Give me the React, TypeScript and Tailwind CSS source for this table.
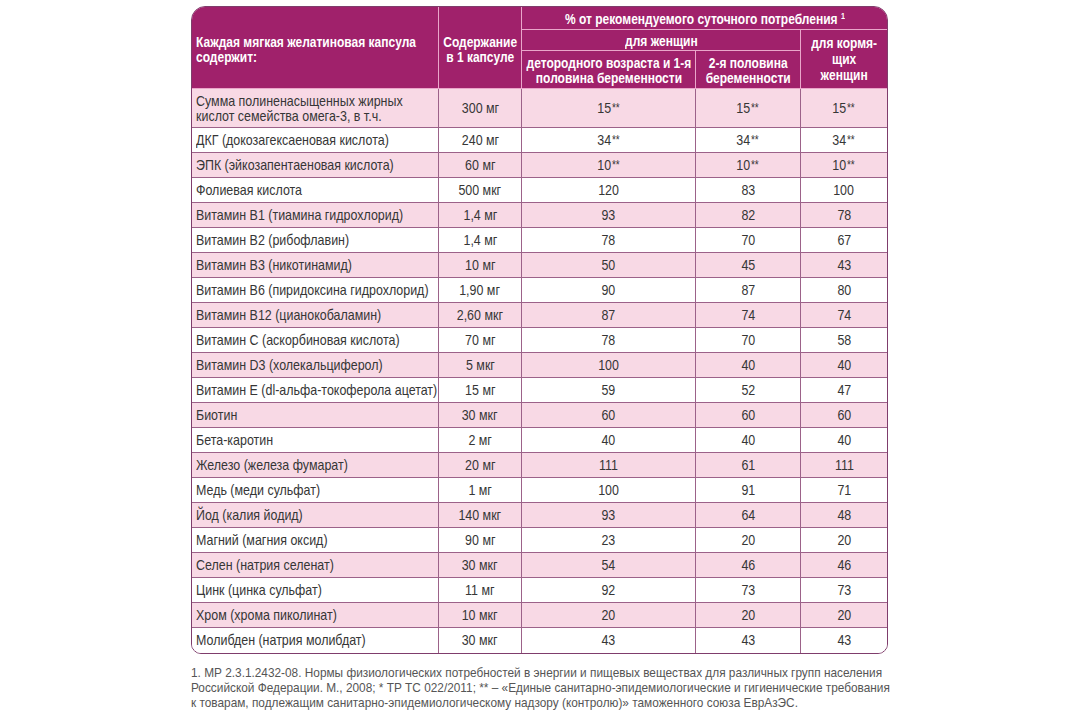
import type { ReactNode } from "react";

const rows: [string, string, string, string, string, boolean?][] = [
  ["ДКГ (докозагексаеновая кислота)", "240 мг", "34", "34", "34", true],
  ["ЭПК (эйкозапентаеновая кислота)", "60 мг", "10", "10", "10", true],
  ["Фолиевая кислота", "500 мкг", "120", "83", "100"],
  ["Витамин В1 (тиамина гидрохлорид)", "1,4 мг", "93", "82", "78"],
  ["Витамин В2 (рибофлавин)", "1,4 мг", "78", "70", "67"],
  ["Витамин В3 (никотинамид)", "10 мг", "50", "45", "43"],
  ["Витамин В6 (пиридоксина гидрохлорид)", "1,90 мг", "90", "87", "80"],
  ["Витамин В12 (цианокобаламин)", "2,60 мкг", "87", "74", "74"],
  ["Витамин С (аскорбиновая кислота)", "70 мг", "78", "70", "58"],
  ["Витамин D3 (холекальциферол)", "5 мкг", "100", "40", "40"],
  ["Витамин Е (dl-альфа-токоферола ацетат)", "15 мг", "59", "52", "47"],
  ["Биотин", "30 мкг", "60", "60", "60"],
  ["Бета-каротин", "2 мг", "40", "40", "40"],
  ["Железо (железа фумарат)", "20 мг", "111", "61", "111"],
  ["Медь (меди сульфат)", "1 мг", "100", "91", "71"],
  ["Йод (калия йодид)", "140 мкг", "93", "64", "48"],
  ["Магний (магния оксид)", "90 мг", "23", "20", "20"],
  ["Селен (натрия селенат)", "30 мкг", "54", "46", "46"],
  ["Цинк (цинка сульфат)", "11 мг", "92", "73", "73"],
  ["Хром (хрома пиколинат)", "10 мкг", "20", "20", "20"],
  ["Молибден (натрия молибдат)", "30 мкг", "43", "43", "43"],
];

// no narrow font installed, so the glyphs are squeezed to get the condensed look
function Nl({ children }: { children: ReactNode }) {
  return <span className="inline-block whitespace-nowrap scale-x-[0.83] origin-left">{children}</span>;
}
function Nc({ children }: { children: ReactNode }) {
  return (
    <div className="flex justify-center">
      <span className="shrink-0 whitespace-nowrap scale-x-[0.83] origin-center">{children}</span>
    </div>
  );
}
function Hd({ children, left }: { children: ReactNode; left?: boolean }) {
  return (
    <div className={`flex ${left ? "justify-start" : "justify-center"}`}>
      <span className={`shrink-0 whitespace-nowrap scale-x-[0.8] ${left ? "origin-left" : "origin-center"}`}>
        {children}
      </span>
    </div>
  );
}

function Val({ v, star }: { v: string; star?: boolean }) {
  return (
    <Nc>
      {v}
      {star && <sup className="text-[12px] relative -top-[1px] ml-[1px]">**</sup>}
    </Nc>
  );
}

export default function App() {
  const th = "border-r border-b border-[#eaa6ca] font-bold text-white text-[15px] leading-[15px] px-1";
  const td = "border-r border-b border-[#9c6289] text-center";
  const last = rows.length - 1;
  return (
    <div className="w-[1080px] h-[720px] bg-white font-['Liberation_Sans',Arial,sans-serif] text-[#363636]">
      <div className="ml-[191px] w-[697px] pt-[6px]">
        <div className="rounded-t-[14px] rounded-b-[10px] overflow-hidden border border-[#7f3d6c]">
          <table className="w-full table-fixed border-separate border-spacing-0 text-[15px]">
            <colgroup>
              <col className="w-[247px]" />
              <col className="w-[83px]" />
              <col className="w-[174px]" />
              <col className="w-[105px]" />
              <col />
            </colgroup>
            <thead className="bg-[#a0216b]">
              <tr className="h-[23px]">
                <th rowSpan={3} className={`${th} text-left pt-[2px]`}>
                  <Hd left>
                    Каждая мягкая желатиновая капсула
                    <br />
                    содержит:
                  </Hd>
                </th>
                <th rowSpan={3} className={`${th} pt-[2px]`}>
                  <Hd>
                    Содержание
                    <br />в 1 капсуле
                  </Hd>
                </th>
                <th colSpan={3} className={`${th} border-r-0 text-[14px]`}>
                  <Hd>
                    % от рекомендуемого суточного потребления <sup className="text-[9px]">1</sup>
                  </Hd>
                </th>
              </tr>
              <tr className="h-[21px]">
                <th colSpan={2} className={th}>
                  <Hd>для женщин</Hd>
                </th>
                <th rowSpan={2} className={`${th} border-r-0 leading-[16px]`}>
                  <Hd>
                    для кормя-
                    <br />
                    щих
                    <br />
                    женщин
                  </Hd>
                </th>
              </tr>
              <tr className="h-[38px]">
                <th className={th}>
                  <Hd>
                    детородного возраста и 1-я
                    <br />
                    половина беременности
                  </Hd>
                </th>
                <th className={th}>
                  <Hd>
                    2-я половина
                    <br />
                    беременности
                  </Hd>
                </th>
              </tr>
            </thead>
            <tbody>
              <tr className="h-[39px] bg-[#f8d9e5]">
                <td className="border-r border-b border-[#9c6289] pl-1 leading-[15px]">
                  <Nl>
                    Сумма полиненасыщенных жирных
                    <br />
                    кислот семейства омега-3, в т.ч.
                  </Nl>
                </td>
                <td className={td}><Nc>300 мг</Nc></td>
                <td className={td}><Val v="15" star /></td>
                <td className={td}><Val v="15" star /></td>
                <td className={`${td} border-r-0`}><Val v="15" star /></td>
              </tr>
              {rows.map(([name, dose, a, b, c, star], i) => (
                <tr key={name} className={`h-[25px] ${i % 2 === 1 ? "bg-[#f8d9e5]" : "bg-white"}`}>
                  <td className={`border-r border-[#9c6289] pl-1 ${i < last ? "border-b" : ""}`}>
                    <Nl>{name}</Nl>
                  </td>
                  <td className={`${td} ${i === last ? "border-b-0" : ""}`}><Nc>{dose}</Nc></td>
                  <td className={`${td} ${i === last ? "border-b-0" : ""}`}><Val v={a} star={star} /></td>
                  <td className={`${td} ${i === last ? "border-b-0" : ""}`}><Val v={b} star={star} /></td>
                  <td className={`${td} border-r-0 ${i === last ? "border-b-0" : ""}`}><Val v={c} star={star} /></td>
                </tr>
              ))}
            </tbody>
          </table>
        </div>
        <p className="mt-[11px] w-[760px] whitespace-nowrap text-[13px] leading-[15px] text-[#555] scale-x-[0.91] origin-left">
          1. МР 2.3.1.2432-08. Нормы физиологических потребностей в энергии и пищевых веществах для различных групп населения
          <br />
          Российской Федерации. М., 2008; * ТР ТС 022/2011; ** – «Единые санитарно-эпидемиологические и гигиенические требования
          <br />
          к товарам, подлежащим санитарно-эпидемиологическому надзору (контролю)» таможенного союза ЕврАзЭС.
        </p>
      </div>
    </div>
  );
}
